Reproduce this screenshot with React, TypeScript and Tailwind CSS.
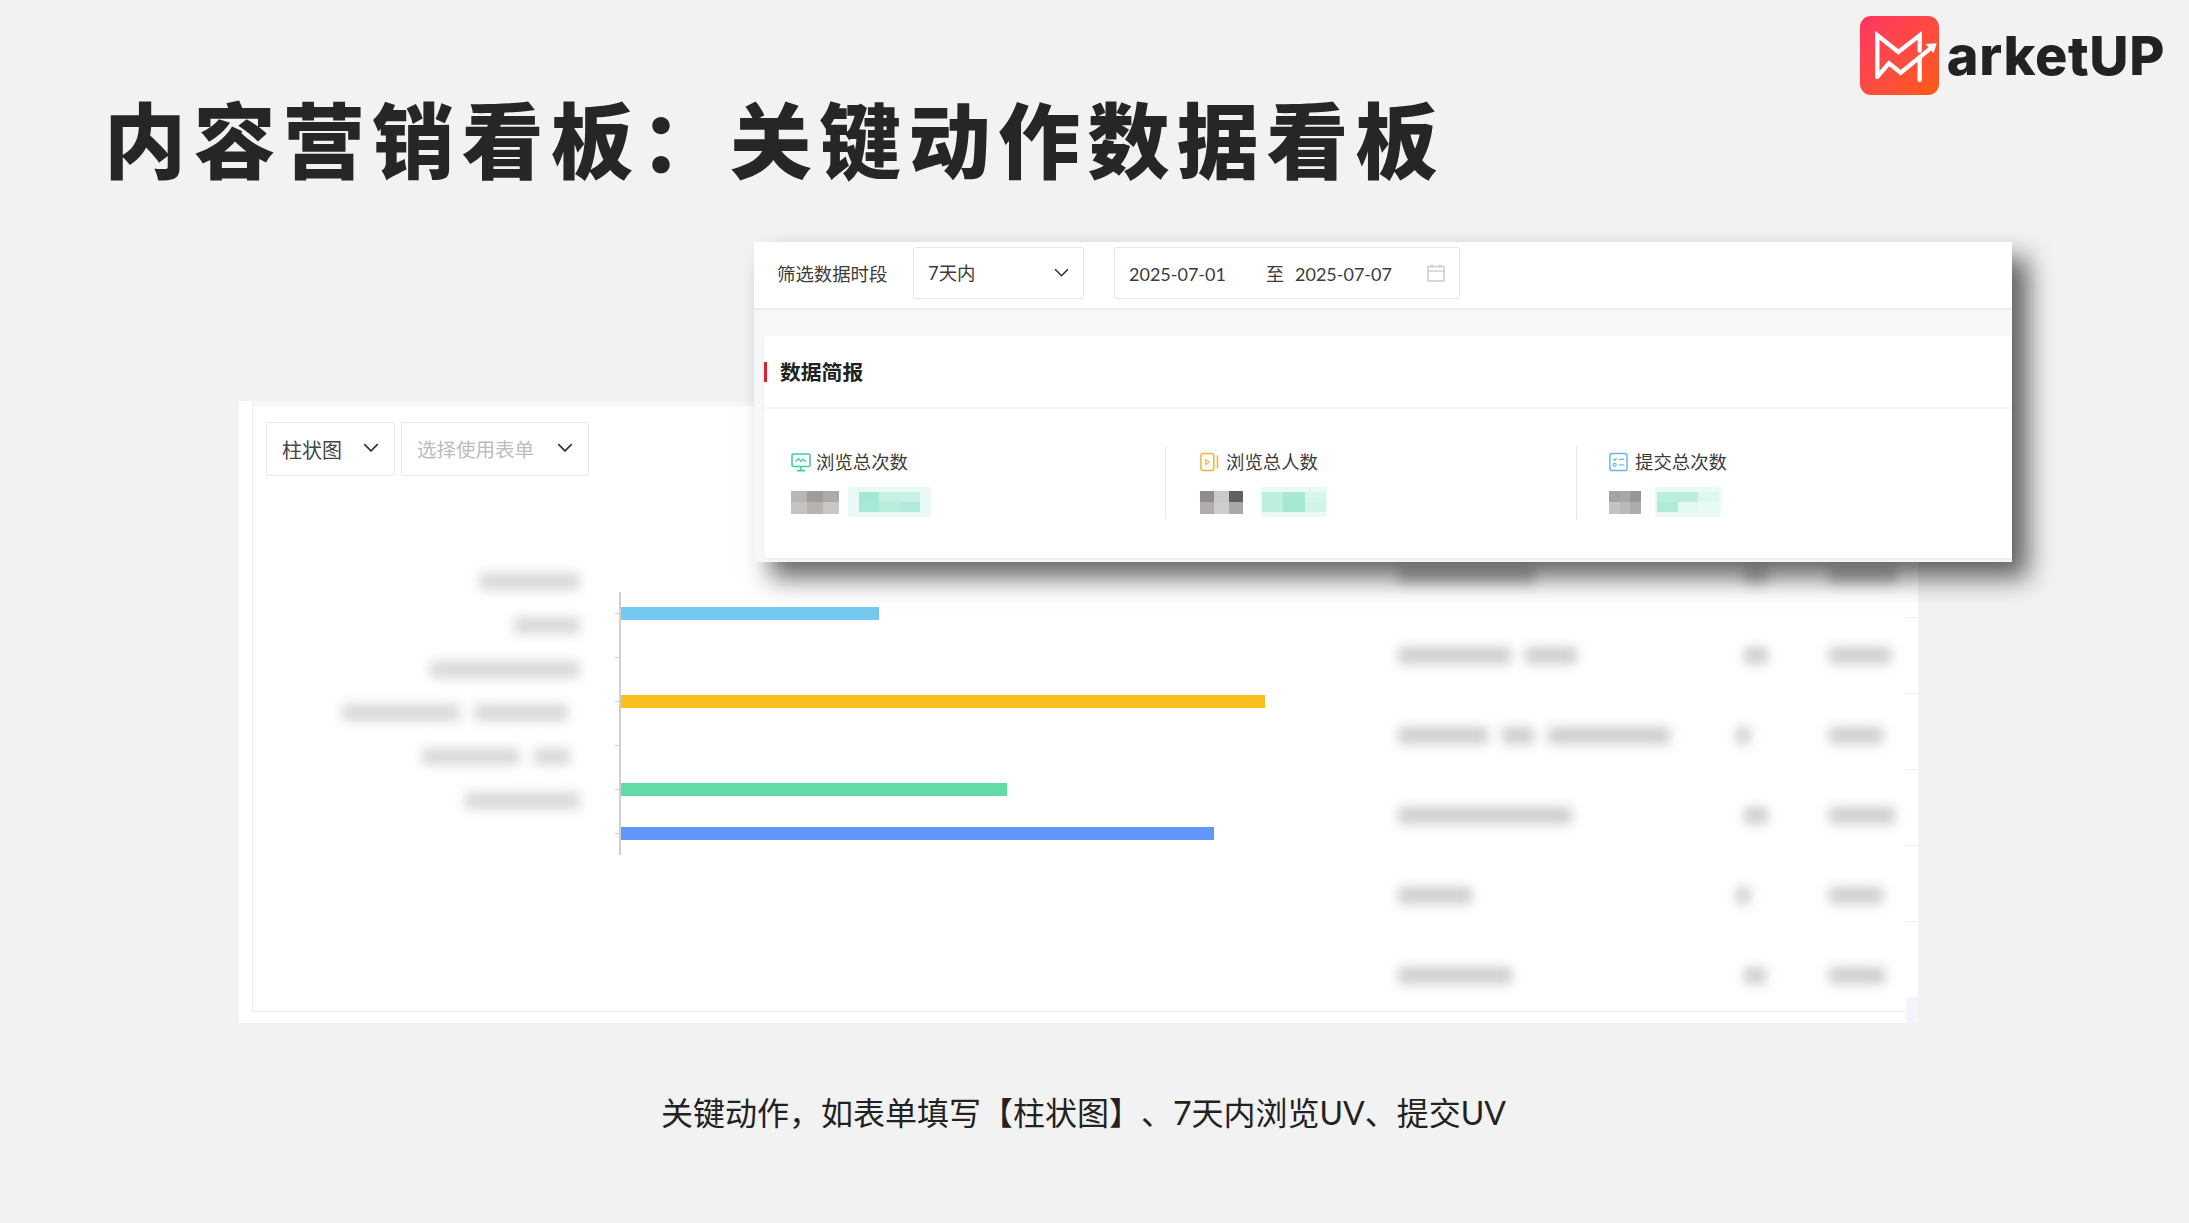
const FONT = "font-['Lato','Noto_Sans_CJK_SC',sans-serif]";

function Chevron({ className }: { className: string }) {
  return (
    <svg viewBox="0 0 14 8" className={className} fill="none" stroke="#333333" strokeWidth="1.5">
      <path d="M1 1l6 6 6-6" />
    </svg>
  );
}

function Logo() {
  return (
    <div className="flex items-center h-[79px]">
      <div className="w-[79px] h-[79px] rounded-[11px] bg-gradient-to-br from-[#ff3560] to-[#ff5a00] shrink-0">
        <svg viewBox="0 0 237 237" className="w-[79px] h-[79px]" fill="none" stroke="#fff" strokeWidth="13" strokeLinejoin="miter" strokeLinecap="round">
          <path d="M52 182V58l63 50 64-50v46" />
          <path d="M52 182l35-40 35 28 86-70" />
          <path d="M179 124v68" />
          <path d="M197 84l33-2-9 30z" fill="#fff" stroke="none" />
        </svg>
      </div>
      <span className="ml-[8px] text-[54px] leading-none font-extrabold text-[#222222] font-['Inter',sans-serif] tracking-[0.65px]">arketUP</span>
    </div>
  );
}

function Select({ children, w, placeholder }: { children: string; w: string; placeholder?: boolean }) {
  return (
    <div className={`${w} h-[54px] flex items-center justify-between pl-[15px] pr-[15px] border border-[#e8e8e8] rounded-[2px] bg-white`}>
      <span className={placeholder ? "mt-[2px] text-[19.5px] text-[#bcbcbc]" : "mt-[2px] text-[20px] text-[#444444]"}>{children}</span>
      <Chevron className="w-[16px] h-[9px] -mt-[3px]" />
    </div>
  );
}

const LABELS: { blocks: string[]; pad: string }[] = [
  { blocks: ["w-[101px]"], pad: "pr-0" },
  { blocks: ["w-[66px]"], pad: "pr-0" },
  { blocks: ["w-[150px]"], pad: "pr-0" },
  { blocks: ["w-[118px]", "w-[94px]"], pad: "pr-[12px]" },
  { blocks: ["w-[98px]", "w-[36px]"], pad: "pr-[10px]" },
  { blocks: ["w-[115px]"], pad: "pr-0" },
];

const BARS: (string | null)[] = [
  "w-[258px] bg-[#74c9ef]",
  null,
  "w-[644px] bg-[#f8c01e]",
  null,
  "w-[386px] bg-[#62dba8]",
  "w-[593px] bg-[#6495f9]",
];

const ROWS: { name: string[]; mid: string; right: string }[] = [
  { name: ["w-[137px]"], mid: "w-[24px]", right: "w-[68px]" },
  { name: ["w-[113px]", "w-[52px]"], mid: "w-[24px]", right: "w-[62px]" },
  { name: ["w-[90px]", "w-[32px]", "w-[122px]"], mid: "w-[14px] ml-[-8px]", right: "w-[54px]" },
  { name: ["w-[174px]"], mid: "w-[24px]", right: "w-[66px]" },
  { name: ["w-[74px]"], mid: "w-[14px] ml-[-8px]", right: "w-[54px]" },
  { name: ["w-[114px]"], mid: "w-[22px]", right: "w-[56px]" },
];

function Blur({ className }: { className: string }) {
  return <div className={`h-[17px] rounded-[3px] bg-[#cdcdcd] blur-[6px] ${className}`} />;
}

function Panel() {
  return (
    <div className="ml-[239px] w-[1679px] h-[622px] flex bg-white">
      <div className="w-[13px] shrink-0" />
      <div className="flex-1 flex flex-col border-l border-[#ececec] mb-[11px] border-b">
        <div className="h-[5px] bg-[#f6f7fb] shrink-0" />
        <div className="flex gap-[6px] ml-[13px] mt-[16px]">
          <Select w="w-[129px]">柱状图</Select>
          <Select w="w-[188px]" placeholder>选择使用表单</Select>
        </div>
        <div className="flex mt-[59px]">
          <div className="w-[327px] pt-[25px] shrink-0">
            {LABELS.map((l, i) => (
              <div key={i} className={`h-[43.7px] flex items-center justify-end gap-[14px] ${l.pad}`}>
                {l.blocks.map((b, j) => (
                  <Blur key={j} className={`${b} bg-[#d8d8d8]`} />
                ))}
              </div>
            ))}
          </div>
          <div className="ml-[39px] mt-[57px] h-[263px] border-l-2 border-[#cfcfcf] w-[690px] shrink-0">
            {BARS.map((b, i) => (
              <div key={i} className="h-[43.83px] flex items-center relative">
                <div className="w-[4px] h-[1px] bg-[#cfcfcf] ml-[-6px]" />
                {b && <div className={`h-[13px] ml-[2px] ${b}`} />}
              </div>
            ))}
          </div>
          <div className="ml-auto w-[508px] shrink-0">
            {ROWS.map((r, i) => (
              <div key={i} className="h-[80px] flex items-center">
                <div className="w-[346px] flex gap-[14px] shrink-0">
                  {r.name.map((n, j) => (
                    <Blur key={j} className={n} />
                  ))}
                </div>
                <div className="w-[85px] shrink-0 flex">
                  <Blur className={r.mid} />
                </div>
                <Blur className={r.right} />
              </div>
            ))}
          </div>
        </div>
      </div>
      <div className="w-[12px] shrink-0 flex flex-col pt-[216px]">
        {[0, 1, 2, 3, 4].map((i) => (
          <div key={i} className="h-[76px] border-t border-[#efefef] shrink-0" />
        ))}
        <div className="mt-auto h-[26px] bg-[#f4f5fa]" />
      </div>
    </div>
  );
}

function Mosaic({ cells, w }: { cells: string[]; w: string }) {
  return (
    <div className={`${w} h-[23px] grid grid-cols-3 grid-rows-2 shrink-0`}>
      {cells.map((c, i) => (
        <div key={i} className={c} />
      ))}
    </div>
  );
}

function Green({ box, inner, cells }: { box: string; inner: string; cells: string[] }) {
  return (
    <div className={`${box} h-[30px] bg-[#e9f9f4] rounded-[3px] flex items-center justify-center shrink-0`}>
      <div className={`${inner} h-[20px] grid grid-cols-3 grid-rows-2`}>
        {cells.map((c, i) => (
          <div key={i} className={c} />
        ))}
      </div>
    </div>
  );
}

function IconScreen() {
  return (
    <svg viewBox="0 0 20 20" className="w-[20px] h-[20px] shrink-0" fill="none" stroke="#3fcfa6" strokeWidth="1.6">
      <rect x="1" y="2" width="18" height="12.5" rx="1.5" />
      <path d="M4.5 9.5l3-3 2.5 3 2-2.5 3 3" strokeWidth="1.2" />
      <path d="M10 14.5V18M6 18.6h8" />
    </svg>
  );
}

function IconPlay() {
  return (
    <svg viewBox="0 0 20 20" className="w-[19px] h-[20px] shrink-0" fill="none" stroke="#fbb32f" strokeWidth="1.6">
      <rect x="1" y="1" width="13.5" height="18" rx="2.5" />
      <path d="M18.4 3v14" />
      <path d="M6 7.2l3.8 2.8L6 12.8z" strokeWidth="1.2" />
    </svg>
  );
}

function IconForm() {
  return (
    <svg viewBox="0 0 20 20" className="w-[19px] h-[20px] shrink-0" fill="none" stroke="#62b5fa" strokeWidth="1.5">
      <rect x="1" y="1" width="18" height="18" rx="2.5" />
      <path d="M4.5 7l1.4 1.4L8 6M10.5 7.2h5.5" strokeWidth="1.2" />
      <circle cx="6" cy="13" r="1.6" strokeWidth="1.2" />
      <path d="M10.5 13h5.5" strokeWidth="1.2" />
    </svg>
  );
}

function Item({ icon, label, pl, w, gap, children, divider }: { icon: React.ReactNode; label: string; pl: string; w: string; gap: string; children: React.ReactNode; divider?: boolean }) {
  return (
    <div className={`${w} ${pl} h-[73px] shrink-0 ${divider ? "border-r border-[#e6e6e6]" : ""}`}>
      <div className={`mt-[4px] h-[24px] flex items-center ${gap}`}>
        {icon}
        <span className="text-[18.4px] leading-[24px] text-[#3c3c3c]">{label}</span>
      </div>
      <div className="mt-[13px] flex items-center">{children}</div>
    </div>
  );
}

function Card() {
  return (
    <div className="absolute left-[754px] top-[242px] w-[1258px] h-[320px] bg-[#f6f7f9] shadow-[16px_16px_24px_rgba(0,0,0,0.6)] flex flex-col">
      <div className="h-[68px] bg-white border-b-2 border-[#ececec] pt-[5px] flex items-start shrink-0">
        <span className="ml-[23px] w-[110px] mt-[15px] text-[18.4px] leading-[24px] text-[#3c3c3c] whitespace-nowrap">筛选数据时段</span>
        <div className="ml-[26px] w-[171px] h-[52px] border border-[#e6e6e6] rounded-[2px] flex items-center justify-between pl-[14px] pr-[14px]">
          <span className="mt-[2px] text-[18.4px] text-[#3c3c3c]">7天内</span>
          <Chevron className="w-[15px] h-[9px] -mt-[1px]" />
        </div>
        <div className="ml-[30px] w-[346px] h-[52px] border border-[#e6e6e6] rounded-[2px] flex items-center pl-[14px] pr-[14px] text-[18px] text-[#3c3c3c]">
          <span className="mt-[2px] w-[137px]">2025-07-01</span>
          <span className="mt-[2px] w-[29px]">至</span>
          <span className="mt-[2px]">2025-07-07</span>
          <svg viewBox="0 0 18 18" className="ml-auto w-[18px] h-[18px]" fill="none" stroke="#cfcfcf" strokeWidth="1.6">
            <rect x="1" y="2.5" width="16" height="14.5" />
            <path d="M1 7h16M5 0.5v3.5M13 0.5v3.5" />
          </svg>
        </div>
      </div>
      <div className="h-[26px] shrink-0" />
      <div className="ml-[10px] h-[222px] bg-white rounded-l-[3px] shrink-0 shadow-[0_1px_3px_rgba(0,0,0,0.06)]">
        <div className="h-[73px] border-b-2 border-[#f4f4f4] flex items-center">
          <div className="w-[3px] h-[20px] bg-[#e0202f]" />
          <span className="ml-[13px] text-[20.8px] font-bold text-[#222222]">数据简报</span>
        </div>
        <div className="pt-[37px] flex">
          <Item icon={<IconScreen />} label="浏览总次数" pl="pl-[27px]" w="w-[402px]" gap="gap-[5px]" divider>
            <Mosaic w="w-[48px]" cells={["bg-[#b9b6b5]", "bg-[#9f9d9c]", "bg-[#adabaa]", "bg-[#c5c3c2]", "bg-[#b6b3b1]", "bg-[#c8c8c9]"]} />
            <div className="w-[9px]" />
            <Green box="w-[83px]" inner="w-[62px]" cells={["bg-[#a4e7d4]", "bg-[#c5f0e3]", "bg-[#c8f1e5]", "bg-[#a8e8d6]", "bg-[#b8ecdc]", "bg-[#b0eadb]"]} />
          </Item>
          <Item icon={<IconPlay />} label="浏览总人数" pl="pl-[34px]" w="w-[411px]" gap="gap-[7px]" divider>
            <Mosaic w="w-[43px]" cells={["bg-[#8f8c8b]", "bg-[#c9c9cb]", "bg-[#626060]", "bg-[#b0aeac]", "bg-[#cdcdcf]", "bg-[#a9a8a8]"]} />
            <div className="w-[18px]" />
            <Green box="w-[66px]" inner="w-[64px]" cells={["bg-[#bcefdf]", "bg-[#a8e8d5]", "bg-[#d8f6ec]", "bg-[#bcefdf]", "bg-[#a4e7d3]", "bg-[#d0f4e9]"]} />
          </Item>
          <Item icon={<IconForm />} label="提交总次数" pl="pl-[32px]" w="w-[400px]" gap="gap-[7px]">
            <Mosaic w="w-[32px]" cells={["bg-[#a5a3a2]", "bg-[#a9a8a7]", "bg-[#989796]", "bg-[#c5c3c2]", "bg-[#bcbab9]", "bg-[#adabab]"]} />
            <div className="w-[14px]" />
            <Green box="w-[66px]" inner="w-[62px]" cells={["bg-[#bdeedd]", "bg-[#bdeedd]", "bg-[#def7ef]", "bg-[#b0eadb]", "bg-[#e4f8f2]", "bg-[#e9f9f4]"]} />
          </Item>
        </div>
      </div>
    </div>
  );
}

export default function App() {
  return (
    <div className={`relative w-full h-[1223px] overflow-hidden bg-[#f2f2f2] ${FONT}`}>
      <header className="h-[401px] flex justify-between items-start pl-[104px] pr-[24px] pt-[16px]">
        <h1 className="mt-[74px] text-[82px] leading-[100px] font-black text-[#262626] tracking-[7.4px] whitespace-nowrap">内容营销看板：关键动作数据看板</h1>
        <Logo />
      </header>
      <Panel />
      <Card />
      <p className="mt-[66px] ml-[661px] text-[32px] leading-[48px] text-[#222222] whitespace-nowrap [text-spacing-trim:space-all]">关键动作，如表单填写【柱状图】、7天内浏览UV、提交UV</p>
    </div>
  );
}
